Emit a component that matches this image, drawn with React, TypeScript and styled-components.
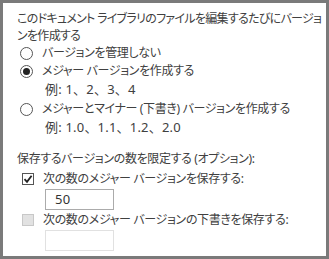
import React from 'react'
import styled, { createGlobalStyle } from 'styled-components'

const GlobalStyle = createGlobalStyle`
  html, body {
    margin: 0;
    padding: 0;
    background: #ffffff;
  }
`

const Panel = styled.div`
  box-sizing: border-box;
  width: 329px;
  height: 259px;
  border: 3px solid #7a7a7a;
  background: #ffffff;
  padding: 7px 4px 0 14px;
  color: #404040;
  font-family: "Noto Sans", "Noto Sans CJK JP", sans-serif;
  font-size: 12px;
  font-feature-settings: "palt";
  letter-spacing: -0.35px;
  overflow: hidden;
`

const Heading = styled.div`
  line-height: 17px;
  white-space: nowrap;
  letter-spacing: -0.7px;
`

const OptionList = styled.div`
  display: flex;
  flex-direction: column;
  padding-left: 3px;
`

const OptionRow = styled.label<{ $gap?: number }>`
  display: flex;
  align-items: center;
  gap: 9px;
  height: 18px;
  line-height: 18px;
  margin-top: ${p => p.$gap ?? 0}px;
`

const Radio = styled.span<{ $checked?: boolean }>`
  box-sizing: border-box;
  width: 13px;
  height: 13px;
  border: 1px solid #555555;
  border-radius: 50%;
  display: flex;
  align-items: center;
  justify-content: center;
  flex-shrink: 0;
  &::after {
    content: '';
    display: ${p => (p.$checked ? 'block' : 'none')};
    width: 7px;
    height: 7px;
    border-radius: 50%;
    background: #222222;
  }
`

const Example = styled.div`
  height: 18px;
  line-height: 18px;
  padding-left: 25px;
  font-size: 13px;
  font-feature-settings: normal;
  letter-spacing: 0.2px;
`

const Section = styled.div`
  margin-top: 14px;
`

const SectionTitle = styled.div`
  height: 18px;
  line-height: 18px;
`

const CheckRow = styled.div<{ $gap?: number }>`
  display: flex;
  align-items: center;
  gap: 9px;
  height: 18px;
  line-height: 18px;
  padding-left: 5px;
  margin-top: ${p => p.$gap ?? 0}px;
`

const CheckBox = styled.span<{ $disabled?: boolean }>`
  box-sizing: border-box;
  width: 12px;
  height: 12px;
  border: 1px solid ${p => (p.$disabled ? '#c8c8c8' : '#555555')};
  background: ${p => (p.$disabled ? '#e2e2e2' : '#ffffff')};
  display: flex;
  align-items: center;
  justify-content: center;
  flex-shrink: 0;
`

const NumberBox = styled.div<{ $disabled?: boolean }>`
  box-sizing: border-box;
  width: 69px;
  height: 21px;
  margin: 1px 0 0 28px;
  border: 1px solid ${p => (p.$disabled ? '#e1e1e1' : '#ababab')};
  padding: 0 9px;
  line-height: 19px;
  font-size: 13px;
  letter-spacing: 0.4px;
  color: #333333;
`

const App: React.FC = () => {
  return (
    <>
      <GlobalStyle />
      <Panel>
        <Heading>
          このドキュメント ライブラリのファイルを編集するたびにバージョ
          <br />
          ンを作成する
        </Heading>
        <OptionList>
          <OptionRow>
            <Radio />
            バージョンを管理しない
          </OptionRow>
          <OptionRow>
            <Radio $checked />
            メジャー バージョンを作成する
          </OptionRow>
          <Example>例: 1、2、3、4</Example>
          <OptionRow $gap={2}>
            <Radio />
            メジャーとマイナー (下書き) バージョンを作成する
          </OptionRow>
          <Example>例: 1.0、1.1、1.2、2.0</Example>
        </OptionList>
        <Section>
          <SectionTitle>保存するバージョンの数を限定する (オプション):</SectionTitle>
          <CheckRow $gap={2}>
            <CheckBox>
              <svg width="10" height="10" viewBox="0 0 10 10">
                <path d="M1.5 5.2 L4 7.8 L8.6 1.8" fill="none" stroke="#222" strokeWidth="1.8" />
              </svg>
            </CheckBox>
            次の数のメジャー バージョンを保存する:
          </CheckRow>
          <NumberBox>50</NumberBox>
          <CheckRow $gap={1}>
            <CheckBox $disabled />
            次の数のメジャー バージョンの下書きを保存する:
          </CheckRow>
          <NumberBox $disabled />
        </Section>
      </Panel>
    </>
  )
}

export default App
